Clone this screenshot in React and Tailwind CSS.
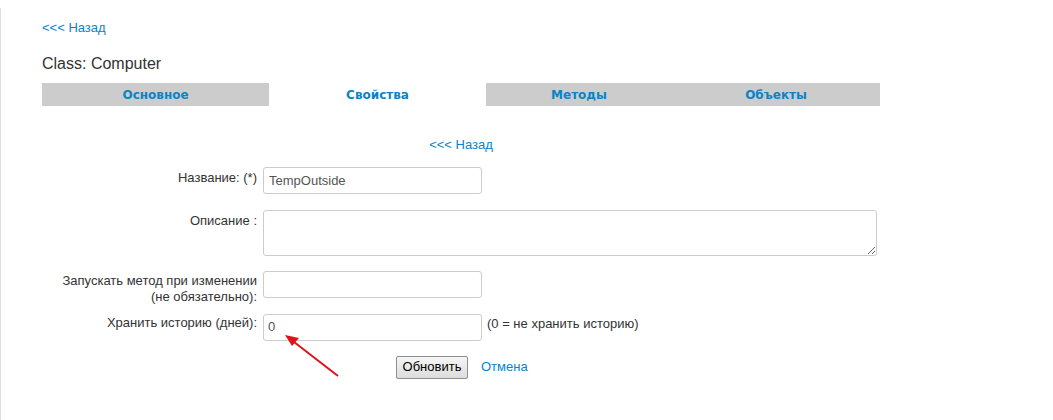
export default function App() {
  const link = "text-[#0a84c6]";
  const font = { fontFamily: '"Liberation Sans", Arial, sans-serif' };
  return (
    <div className="relative w-[1053px] h-[420px] bg-white overflow-hidden text-[#333] text-[13px]" style={font}>
      <div className="absolute left-0 top-[8px] bottom-0 w-px bg-[#dcdcdc]" />
      <div className="pl-[42px] pt-[20px]">
        <a className={`${link} text-[13px] leading-[16px] block`}>&lt;&lt;&lt; Назад</a>
        <div className="mt-[18px] text-[16px] leading-[19px] text-[#333]">Class: Computer</div>
        <div className="mt-[10px] flex w-[838px] h-[23px] text-[12px] font-bold text-[#0a84c6]" style={{ fontFamily: '"DejaVu Sans", Verdana, sans-serif' }}>
          <div className="w-[227px] bg-[#cccccc] flex items-center justify-center">Основное</div>
          <div className="w-[217px] bg-white flex items-center justify-center">Свойства</div>
          <div className="w-[186px] bg-[#cccccc] flex items-center justify-center">Методы</div>
          <div className="flex-1 bg-[#cccccc] flex items-center justify-center">Объекты</div>
        </div>
      </div>
      <div className="w-[922px] text-center mt-[29px]">
        <a className={`${link} leading-[16px]`}>&lt;&lt;&lt; Назад</a>
      </div>
      <div className="mt-[12px] grid grid-cols-[257px_auto] gap-x-[6px] gap-y-[16px] items-start">
        <div className="text-right pt-[3px] leading-[15px]">Название: (*)</div>
        <div className="flex">
          <input readOnly value="TempOutside" className="w-[219px] h-[27px] border border-[#cccccc] rounded-[3px] px-[5px] text-[13px] text-[#555] outline-none" style={font} />
        </div>
        <div className="text-right pt-[3px] leading-[15px]">Описание :</div>
        <div className="flex">
          <textarea readOnly className="w-[614px] h-[46px] border border-[#cccccc] rounded-[3px] px-[5px] text-[13px] outline-none resize-y" style={font} />
        </div>
        <div className="text-right leading-[16px] pt-[1px]">Запускать метод при изменении<br />(не обязательно):</div>
        <div className="flex -mt-[1px]">
          <input readOnly className="w-[219px] h-[27px] border border-[#cccccc] rounded-[3px] px-[5px] outline-none" />
        </div>
        <div className="text-right pt-[1px] leading-[15px] -mt-[7px]">Хранить историю (дней):</div>
        <div className="flex items-start gap-[5px] -mt-[7px]">
          <input readOnly value="0" className="w-[219px] h-[27px] border border-[#cccccc] rounded-[3px] px-[4px] pb-[2px] text-[13px] text-[#555] outline-none" style={font} />
          <span className="pt-[2px] leading-[15px]">(0 = не хранить историю)</span>
        </div>
      </div>
      <div className="mt-[15px] flex items-center pl-[396px] gap-[13px]">
        <button className="w-[72px] h-[23px] border border-[#8e8e8e] rounded-[2px] bg-gradient-to-b from-[#f6f6f6] to-[#dcdcdc] text-[13px] text-black leading-[18px]" style={font}>Обновить</button>
        <a className={`${link} text-[13px]`}>Отмена</a>
      </div>
      <svg className="absolute left-0 top-0 pointer-events-none" width="1053" height="420">
        <line x1="338" y1="376" x2="294" y2="342" stroke="#e0131a" strokeWidth="2" />
        <polygon points="285,335 299,338 292,346" fill="#e0131a" />
      </svg>
    </div>
  );
}
